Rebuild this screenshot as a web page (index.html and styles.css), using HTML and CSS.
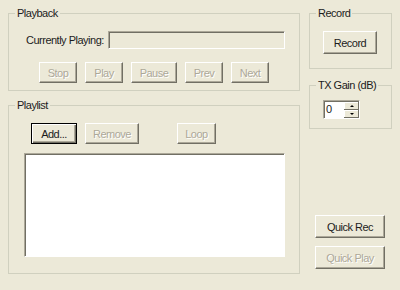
FILE: index.html
```html
<!DOCTYPE html>
<html lang="en">
<head>
    <meta charset="UTF-8">
    <title>Playback</title>
    <link rel="stylesheet" href="styles.css">
</head>
<body>
    <div class="dialog">
        <div class="main-col">
            <fieldset class="group playback">
                <legend>Playback</legend>
                <div class="now-row">
                    <span class="label">Currently Playing:</span>
                    <div class="field readonly"></div>
                </div>
                <div class="btn-row transport">
                    <button class="btn" disabled>Stop</button>
                    <button class="btn" disabled>Play</button>
                    <button class="btn wide" disabled>Pause</button>
                    <button class="btn" disabled>Prev</button>
                    <button class="btn" disabled>Next</button>
                </div>
            </fieldset>

            <fieldset class="group playlist">
                <legend>Playlist</legend>
                <div class="btn-row list-tools">
                    <button class="btn default add">Add...</button>
                    <button class="btn remove" disabled>Remove</button>
                    <button class="btn loop" disabled>Loop</button>
                </div>
                <div class="listbox"></div>
            </fieldset>
        </div>

        <div class="side-col">
            <fieldset class="group record">
                <legend>Record</legend>
                <button class="btn record-btn">Record</button>
            </fieldset>

            <fieldset class="group gain">
                <legend>TX Gain (dB)</legend>
                <div class="spin">
                    <span class="spin-value">0</span>
                    <div class="spin-arrows">
                        <span class="arrow up"></span>
                        <span class="arrow down"></span>
                    </div>
                </div>
            </fieldset>

            <div class="quick">
                <button class="btn quick-btn">Quick Rec</button>
                <button class="btn quick-btn" disabled>Quick Play</button>
            </div>
        </div>
    </div>
</body>
</html>
```

FILE: styles.css
```css
/* Dialog base */
body {
    margin: 0;
    background-color: #ece9d8;
    font-family: 'Liberation Sans', Arial, sans-serif;
    font-size: 11px;
    letter-spacing: -0.5px;
    color: #1c1c1c;
}

.dialog {
    display: flex;
    width: 400px;
    height: 290px;
    padding: 7px 0 0 8px;
    box-sizing: border-box;
}

.main-col {
    width: 292px;
    display: flex;
    flex-direction: column;
}

.side-col {
    width: 83px;
    margin-left: 9px;
    display: flex;
    flex-direction: column;
}

/* Group boxes */
.group {
    margin: 0;
    padding: 0;
    min-width: 0;
    box-sizing: border-box;
    border: 1px solid #d0d0bf;
}

.group legend {
    margin-left: 6px;
    padding: 0 2px;
    line-height: 13px;
    height: 13px;
}

.playback {
    height: 84px;
}

.playlist {
    height: 175px;
    margin-top: 8px;
}

.record {
    height: 62px;
}

.gain {
    height: 50px;
    margin-top: 10px;
}

/* Buttons */
.btn {
    appearance: none;
    font: inherit;
    letter-spacing: inherit;
    color: #1c1c1c;
    background-color: #ece9d8;
    height: 21px;
    width: 38px;
    padding: 0;
    margin: 0;
    border: 1px solid;
    border-color: #fff #716f64 #716f64 #fff;
    box-shadow: inset -1px -1px 0 #aca899;
    border-radius: 0;
}

.btn:disabled {
    color: #aca899;
    text-shadow: 1px 1px 0 #fff;
}

.btn.default {
    border-color: #000;
    box-shadow: inset 1px 1px 0 #fff, inset -1px -1px 0 #716f64, inset -2px -2px 0 #aca899;
}

.btn-row {
    display: flex;
    gap: 8px;
}

/* Playback */
.now-row {
    display: flex;
    align-items: center;
    padding: 11px 14px 0 17px;
}

.field {
    width: 177px;
    height: 18px;
    margin-left: auto;
    box-sizing: border-box;
    border: 1px solid;
    border-color: #aca899 #fff #fff #aca899;
    box-shadow: inset 1px 1px 0 #716f64;
}

.field.readonly {
    background-color: #ece9d8;
}

.transport {
    padding: 13px 0 0 30px;
}

.transport .wide {
    width: 46px;
}

/* Playlist */
.list-tools {
    padding: 11px 0 0 22px;
}

.add {
    width: 46px;
}

.remove {
    width: 54px;
}

.loop {
    width: 39px;
    margin-left: 30px;
}

.listbox {
    width: 261px;
    height: 104px;
    margin: 9px 0 0 15px;
    box-sizing: border-box;
    background-color: #fff;
    border: 1px solid;
    border-color: #aca899 #fff #fff #aca899;
    box-shadow: inset 1px 1px 0 #716f64;
}

/* Record */
.record-btn {
    width: 54px;
    height: 23px;
    margin: 11px 0 0 13px;
}

/* TX gain spinner */
.spin {
    display: flex;
    width: 37px;
    height: 19px;
    margin: 8px 0 0 13px;
    box-sizing: border-box;
    background-color: #fff;
    border: 1px solid;
    border-color: #aca899 #fff #fff #aca899;
    box-shadow: inset 1px 1px 0 #716f64;
}

.spin-value {
    flex: 1;
    padding: 1px 0 0 2px;
    line-height: 15px;
}

.spin-arrows {
    width: 15px;
    display: flex;
    flex-direction: column;
    padding: 1px 0 0 0;
}

.arrow {
    flex: 1;
    position: relative;
    background-color: #ece9d8;
    border-right: 1px solid #716f64;
    border-bottom: 1px solid #716f64;
    box-shadow: inset 1px 1px 0 #fff;
}

.arrow::after {
    content: "";
    position: absolute;
    left: 6px;
    width: 0;
    height: 0;
    border-left: 2px solid transparent;
    border-right: 2px solid transparent;
}

.arrow.up::after {
    top: 3px;
    border-bottom: 2px solid #000;
}

.arrow.down::after {
    top: 3px;
    border-top: 2px solid #000;
}

/* Quick buttons */
.quick {
    display: flex;
    flex-direction: column;
    gap: 8px;
    margin: 86px 0 0 6px;
}

.quick-btn {
    width: 70px;
    height: 23px;
}
```
